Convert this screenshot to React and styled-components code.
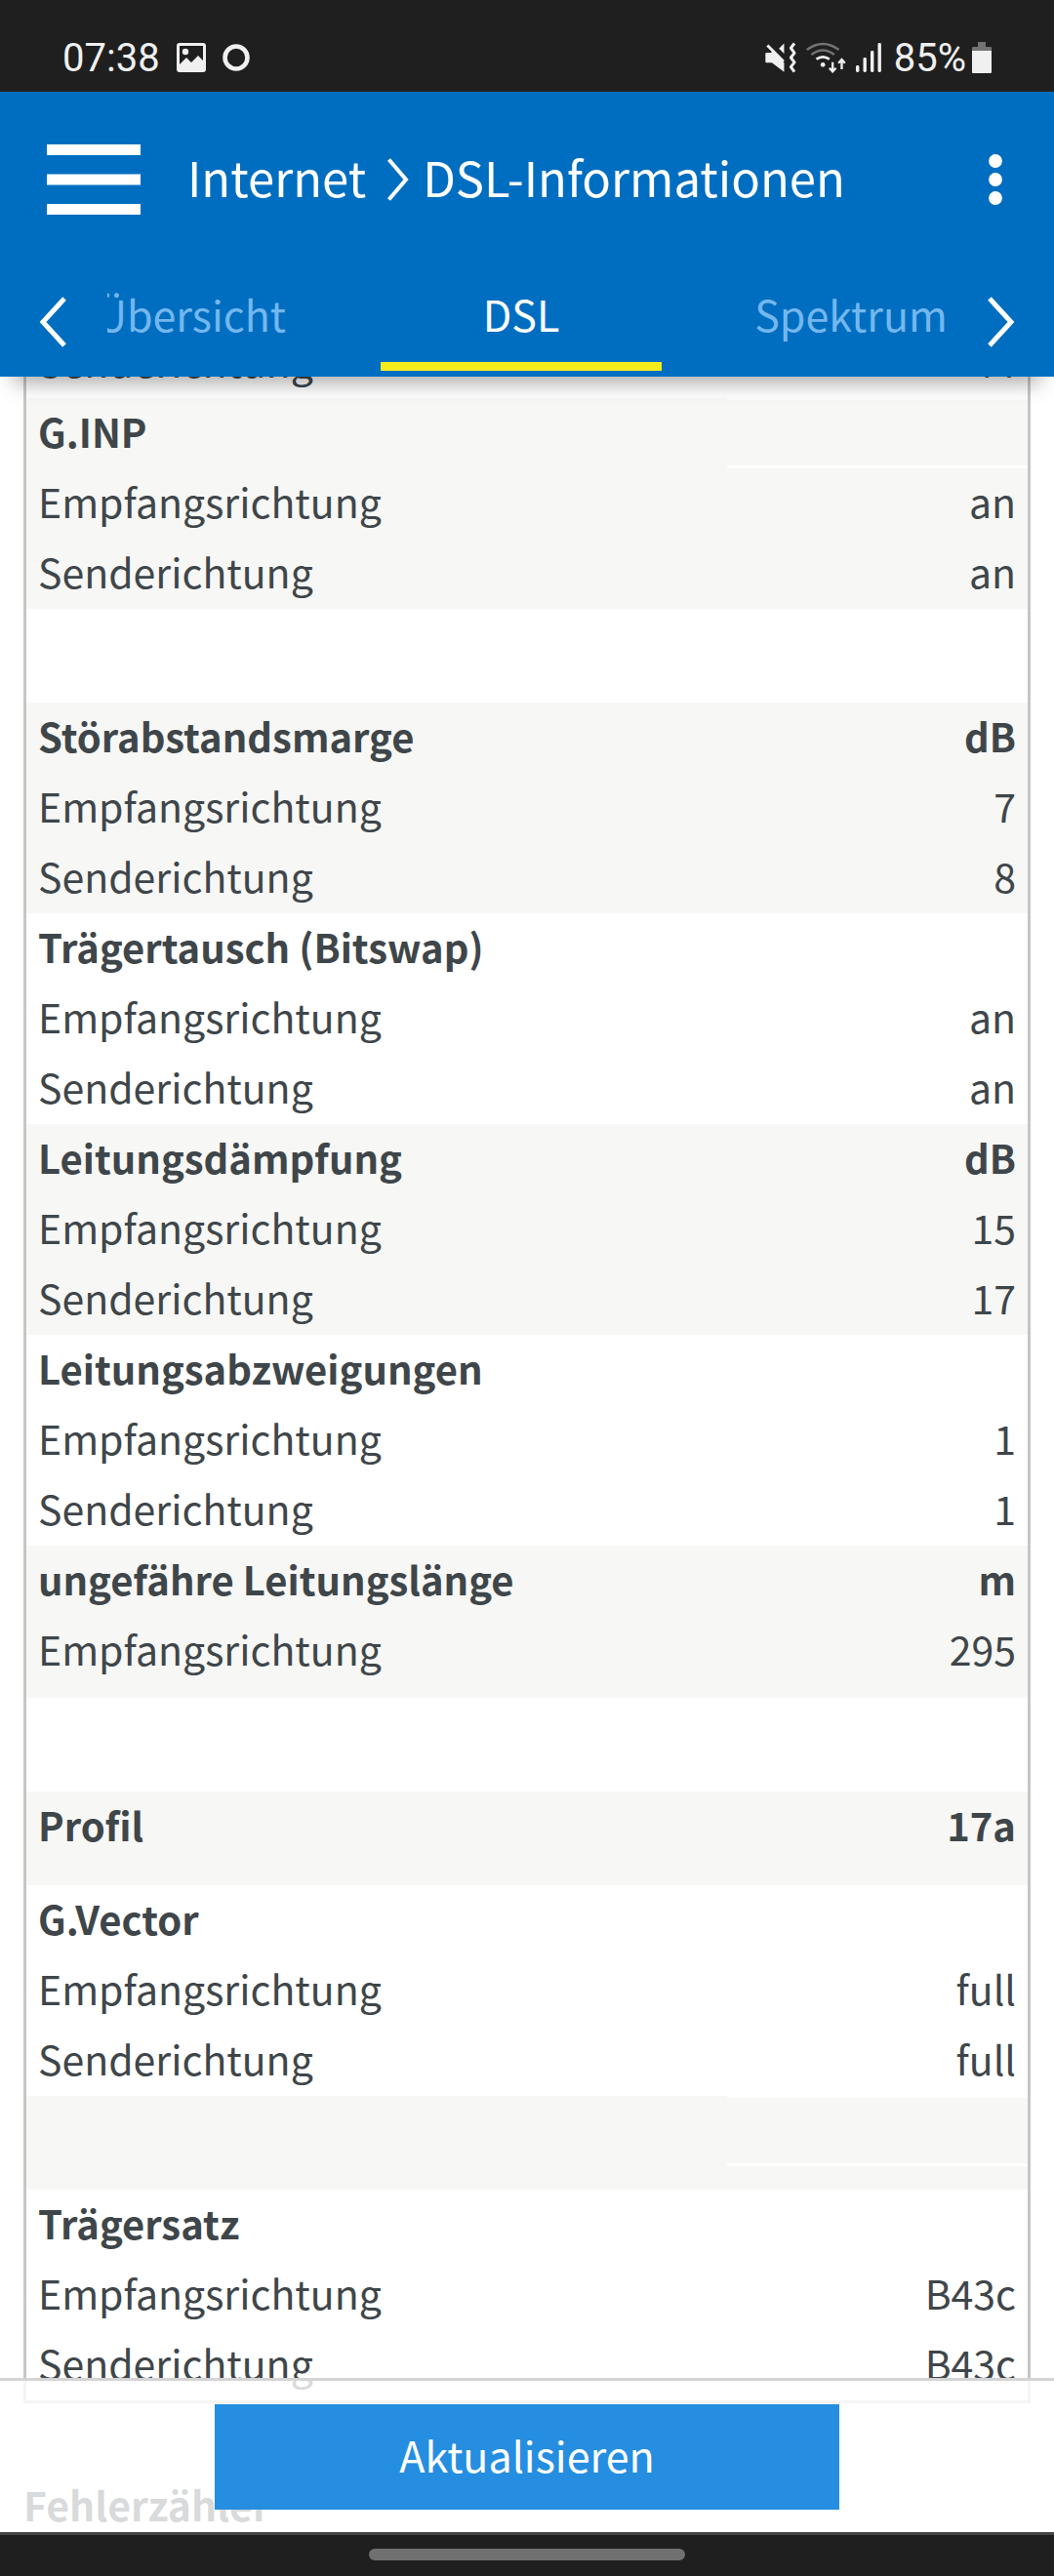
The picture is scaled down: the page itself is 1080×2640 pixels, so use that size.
import React from 'react'
import styled, { createGlobalStyle } from 'styled-components'

const colors = {
  system: '#1f1f1f',
  systemIcon: '#f0f0f0',
  systemDim: '#737373',
  header: '#006ec0',
  tabIdle: '#74b7ee',
  marker: '#f4ec1c',
  button: '#258ee0',
  text: '#3f464a',
  stripe: '#f7f7f5',
  border: '#c6c7c3',
  white: '#ffffff',
}

// loose: empty space under the last row of a group
const groups = [
  { rows: [['Senderichtung', '44']] },
  { title: 'G.INP', striped: true, rows: [['Empfangsrichtung', 'an'], ['Senderichtung', 'an']] },
  { title: '', loose: 24, rows: [] },
  { title: 'Störabstandsmarge', unit: 'dB', striped: true, rows: [['Empfangsrichtung', '7'], ['Senderichtung', '8']] },
  { title: 'Trägertausch (Bitswap)', rows: [['Empfangsrichtung', 'an'], ['Senderichtung', 'an']] },
  { title: 'Leitungsdämpfung', unit: 'dB', striped: true, rows: [['Empfangsrichtung', '15'], ['Senderichtung', '17']] },
  { title: 'Leitungsabzweigungen', rows: [['Empfangsrichtung', '1'], ['Senderichtung', '1']] },
  { title: 'ungefähre Leitungslänge', unit: 'm', striped: true, loose: 12, rows: [['Empfangsrichtung', '295']] },
  { title: '', loose: 24, rows: [] },
  { title: 'Profil', unit: '17a', striped: true, loose: 24, rows: [] },
  { title: 'G.Vector', rows: [['Empfangsrichtung', 'full'], ['Senderichtung', 'full']] },
  { title: '', striped: true, loose: 24, rows: [] },
  { title: 'Trägersatz', rows: [['Empfangsrichtung', 'B43c'], ['Senderichtung', 'B43c']] },
]

const ImageIcon = () => (
  <svg width="30" height="30" viewBox="0 0 30 30">
    <path
      fillRule="evenodd"
      fill={colors.systemIcon}
      d="M3 0h24a3 3 0 0 1 3 3v24a3 3 0 0 1-3 3H3a3 3 0 0 1-3-3V3a3 3 0 0 1 3-3zM3 3v19l7-7 5 5 7-7 5 5V3z"
    />
    <circle cx="9" cy="9" r="3.2" fill={colors.systemIcon} />
  </svg>
)

const RingIcon = () => (
  <svg width="28" height="28" viewBox="0 0 28 28">
    <circle cx="14" cy="14" r="11.5" fill="none" stroke={colors.systemIcon} strokeWidth="4.6" />
  </svg>
)

const MuteIcon = () => (
  <svg width="33" height="32" viewBox="0 0 100 96">
    <path d="M4 36q0-3 3-3h14l6-5 35 36v29L24 64H7q-3 0-3-3z" fill={colors.systemIcon} />
    <path d="M62 4v32L46 20z" fill={colors.systemIcon} />
    <path d="M10 10l50 50" stroke={colors.systemIcon} strokeWidth="9" />
    <path
      d="M94 4L83 18l11 16-11 14 11 15-11 14 11 15"
      fill="none"
      stroke={colors.systemIcon}
      strokeWidth="9"
      strokeLinejoin="round"
    />
  </svg>
)

const WifiIcon = () => (
  <svg width="43" height="32" viewBox="0 0 128 96" fill="none" strokeWidth="8">
    <path d="M5 24Q54-12 103 24" stroke={colors.systemDim} />
    <path d="M19 39Q54 12 89 39" stroke={colors.systemDim} />
    <path d="M34 53Q54 39 74 53" stroke={colors.systemIcon} />
    <circle cx="54" cy="70" r="7" fill={colors.systemIcon} />
    <path d="M84 62v28M74 80l10 11 10-11M112 84V54M102 65l10-11 10 11" stroke={colors.systemIcon} strokeWidth="7" />
  </svg>
)

const SignalIcon = () => (
  <svg width="26" height="30" viewBox="0 0 26 30" fill={colors.systemIcon}>
    <rect x="0" y="23" width="3.4" height="7" rx="1.4" />
    <rect x="7.5" y="15" width="3.4" height="15" rx="1.4" />
    <rect x="15" y="8" width="3.4" height="22" rx="1.4" />
    <rect x="22.5" y="0" width="3.4" height="30" rx="1.4" />
  </svg>
)

const BatteryIcon = () => (
  <svg width="20" height="32" viewBox="0 0 20 32">
    <path d="M6 0h8v5h5q1 0 1 1v4H0V6q0-1 1-1h5z" fill={colors.systemDim} />
    <path d="M0 9h20v22q0 1-1 1H1q-1 0-1-1z" fill={colors.systemIcon} />
  </svg>
)

const CrumbIcon = () => (
  <svg width="22" height="44" viewBox="0 0 22 44" fill="none" stroke={colors.white} strokeWidth="4">
    <path d="M1.5 1.5L19 22 1.5 42.5" />
  </svg>
)

const BackIcon = () => (
  <svg width="28" height="52" viewBox="0 0 28 52" fill="none" stroke={colors.white} strokeWidth="5">
    <path d="M26 2L4 26l22 24" />
  </svg>
)

const NextIcon = () => (
  <svg width="28" height="52" viewBox="0 0 28 52" fill="none" stroke={colors.white} strokeWidth="5">
    <path d="M2 2l22 24L2 50" />
  </svg>
)

const MenuIcon = () => (
  <svg width="96" height="72" viewBox="0 0 96 72" fill={colors.white}>
    <path d="M0 0h96v11H0zM0 30.5h96v11H0zM0 61h96v11H0z" />
  </svg>
)

const DotsIcon = () => (
  <svg width="14" height="52" viewBox="0 0 14 52" fill={colors.white}>
    <circle cx="7" cy="7" r="6.9" />
    <circle cx="7" cy="26" r="6.9" />
    <circle cx="7" cy="45" r="6.9" />
  </svg>
)

const App = () => {
  return (
    <Screen>
      <GlobalStyle />
      <StatusBar>
        <StatusGroup>
          <span>07:38</span>
          <ImageIcon />
          <RingIcon />
        </StatusGroup>
        <StatusIcons>
          <MuteIcon />
          <WifiIcon />
          <SignalIcon />
          <Battery>
            <span>85%</span>
            <BatteryIcon />
          </Battery>
        </StatusIcons>
      </StatusBar>

      <Header>
        <TitleRow>
          <IconButton aria-label="Menü"><MenuIcon /></IconButton>
          <Title>
            <Crumb href="#internet">Internet</Crumb>
            <CrumbIcon />
            <span>DSL-Informationen</span>
          </Title>
          <IconButton aria-label="Mehr"><DotsIcon /></IconButton>
        </TitleRow>
        <TabRow>
          <IconButton aria-label="Zurück"><BackIcon /></IconButton>
          <Tabs>
            <Tab>Übersicht</Tab>
            <Tab $active>DSL</Tab>
            <Tab>Spektrum</Tab>
          </Tabs>
          <IconButton aria-label="Weiter"><NextIcon /></IconButton>
        </TabRow>
      </Header>

      <Main>
        <Content>
          <Table>
            {groups.map((group, i) => (
              <Group key={i} $striped={group.striped}>
                {group.title !== undefined && (
                  <tr>
                    <HeadCell scope="row">{group.title}</HeadCell>
                    <UnitCell $empty={group.striped && !group.unit}>{group.unit}</UnitCell>
                  </tr>
                )}
                {group.rows.map(([label, value]) => (
                  <tr key={label}>
                    <LabelCell>{label}</LabelCell>
                    <ValueCell>{value}</ValueCell>
                  </tr>
                ))}
                {group.loose && (
                  <tr>
                    <LooseCell colSpan={2} $height={group.loose} />
                  </tr>
                )}
              </Group>
            ))}
          </Table>
          <SectionTitle>Fehlerzähler</SectionTitle>
        </Content>
        <Footer>
          <RefreshButton>Aktualisieren</RefreshButton>
        </Footer>
      </Main>

      <NavBar>
        <NavHandle />
      </NavBar>
    </Screen>
  )
}

const GlobalStyle = createGlobalStyle`
* {
  box-sizing: border-box;
}
body {
  margin: 0;
}
svg {
  display: block;
  flex-shrink: 0;
}
button {
  padding: 0;
  border: none;
  background: none;
  font-family: inherit;
  cursor: pointer;
}
`
const Screen = styled.div`
display: flex;
flex-direction: column;
height: 100vh;
background-color: ${colors.white};
color: ${colors.text};
font-family: 'Noto Sans CJK SC', sans-serif;
font-size: 41px;
`
const StatusBar = styled.div`
display: flex;
justify-content: space-between;
align-items: center;
flex-shrink: 0;
height: 94px;
padding: 24px 64px 0;
background-color: ${colors.system};
color: ${colors.systemIcon};
font-family: Roboto, sans-serif;
font-size: 40px;
`
const StatusGroup = styled.div`
display: flex;
align-items: center;
gap: 17px;
`
const StatusIcons = styled(StatusGroup)`
gap: 9px;
`
const Battery = styled.div`
display: flex;
align-items: center;
gap: 6px;
margin-left: 4px;
`
const Header = styled.header`
position: relative;
z-index: 2;
flex-shrink: 0;
background-color: ${colors.header};
color: ${colors.white};
box-shadow: 0 20px 20px -14px rgba(0, 0, 0, 0.35);
`
const TitleRow = styled.div`
display: flex;
align-items: center;
height: 180px;
padding: 0 53px 0 48px;
`
const IconButton = styled.button`
flex-shrink: 0;
`
const Title = styled.h1`
display: flex;
align-items: center;
flex: 1;
gap: 14px;
margin: 0 0 0 48px;
font-size: 49px;
font-weight: 400;
line-height: 60px;
span, a {
  padding-bottom: 6px;
}
`
const Crumb = styled.a`
padding-right: 8px;
color: inherit;
text-decoration: none;
`
const TabRow = styled.div`
display: flex;
align-items: center;
justify-content: space-between;
height: 112px;
padding: 0 40px;
`
const Tabs = styled.nav`
display: flex;
justify-content: center;
align-self: flex-start;
flex: 1;
gap: 50px;
margin: 0 42px;
padding-right: 12px;
overflow: hidden;
`
const Tab = styled.button`
flex: 0 0 288px;
height: 106px;
&& {
  padding-bottom: 4px;
  border-bottom: 9px solid ${props => (props.$active ? colors.marker : 'transparent')};
}
color: ${props => (props.$active ? colors.white : colors.tabIdle)};
font-size: 43px;
`
const Main = styled.main`
position: relative;
flex: 1;
overflow: hidden;
`
const Content = styled.div`
margin-top: -50px;
padding: 0 24px;
`
const Table = styled.table`
width: 100%;
border: 3px solid ${colors.border};
border-top: none;
border-spacing: 0;
table-layout: fixed;
`
const Group = styled.tbody`
background-color: ${props => (props.$striped ? colors.stripe : colors.white)};
`
const LabelCell = styled.td`
width: 70%;
height: 72px;
padding: 0 0 6px 12px;
line-height: 60px;
`
const HeadCell = styled(LabelCell).attrs({ as: 'th' })`
padding-bottom: 4px;
text-align: left;
font-size: 40px;
font-weight: 700;
`
const ValueCell = styled.td`
width: 30%;
height: 72px;
padding: 0 12px 6px 0;
line-height: 60px;
text-align: right;
`
const UnitCell = styled(ValueCell)`
padding-bottom: 4px;
border: 0 solid ${colors.white};
border-width: ${props => (props.$empty ? '2px 0 3px' : '0')};
font-size: 40px;
font-weight: 700;
`
const LooseCell = styled.td`
height: ${props => props.$height}px;
padding: 0;
`
const SectionTitle = styled.h2`
margin: 73px 0 0;
font-size: 41px;
font-weight: 700;
line-height: 60px;
`
const Footer = styled.footer`
position: absolute;
right: 0;
bottom: 0;
left: 0;
display: flex;
justify-content: center;
padding: 24px 0 23px;
border-top: 3px solid #d4d4d4;
background-color: rgba(255, 255, 255, 0.8);
background-clip: padding-box;
`
const RefreshButton = styled.button`
width: 640px;
max-width: 100%;
height: 108px;
&& {
  padding-bottom: 6px;
  background-color: ${colors.button};
}
color: ${colors.white};
font-size: 43px;
`
const NavBar = styled.div`
display: flex;
justify-content: center;
flex-shrink: 0;
height: 45px;
padding-top: 14px;
border-top: 3px solid #454545;
background-color: ${colors.system};
`
const NavHandle = styled.div`
width: 324px;
height: 12px;
border-radius: 6px;
background-color: #707070;
`

export default App
